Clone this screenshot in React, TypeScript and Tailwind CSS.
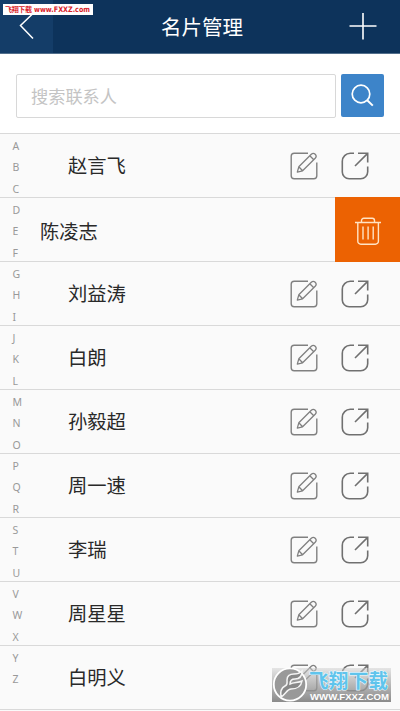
import { useState } from "react";

type Contact = { name: string; letters: string[]; swiped?: boolean };

const contacts: Contact[] = [
  { name: "赵言飞", letters: ["A", "B", "C"] },
  { name: "陈凌志", letters: ["D", "E", "F"], swiped: true },
  { name: "刘益涛", letters: ["G", "H", "I"] },
  { name: "白朗", letters: ["J", "K", "L"] },
  { name: "孙毅超", letters: ["M", "N", "O"] },
  { name: "周一速", letters: ["P", "Q", "R"] },
  { name: "李瑞", letters: ["S", "T", "U"] },
  { name: "周星星", letters: ["V", "W", "X"] },
  { name: "白明义", letters: ["Y", "Z"] },
];

function EditIcon() {
  return (
    <svg width="28" height="28" viewBox="0 0 28 28" fill="none" stroke="#808080" strokeWidth="1.4">
      <path d="M18 1.2H4.2a3 3 0 0 0-3 3v19.6a3 3 0 0 0 3 3h19.6a3 3 0 0 0 3-3V10.5" />
      <path
        d="M7.3 20.2l1.5-5.4L21.3 2.3a2.7 2.7 0 0 1 3.9 3.9L12.6 18.8zM8.8 14.8l3.8 4M19.8 3.8l4 4"
        strokeLinejoin="round"
        strokeWidth="1.3"
      />
    </svg>
  );
}

function ShareIcon() {
  return (
    <svg width="28" height="28" viewBox="0 0 28 28" fill="none" stroke="#707070" strokeWidth="1.6">
      <path d="M13 1.3H9.3a8 8 0 0 0-8 8V20a6.8 6.8 0 0 0 6.8 6.8h11.6a7 7 0 0 0 7-7V14.5" />
      <path d="M17 1.3h9.7v9.2M26.4 1.6L14 14" />
    </svg>
  );
}

function TrashIcon() {
  return (
    <svg width="28" height="28" viewBox="0 0 28 28" fill="none" stroke="#ffe3c4" strokeWidth="1.4">
      <path d="M1 5.5h26M7.5 5.2V3.5A2.2 2.2 0 0 1 9.7 1.3h8.6a2.2 2.2 0 0 1 2.2 2.2v1.7" />
      <path d="M3.8 5.5v18.7a3 3 0 0 0 3 3h14.6a3 3 0 0 0 3-3V5.5M9 9.5v13M14.1 9.5v13M19.2 9.5v13" />
    </svg>
  );
}

function ContactRow({ contact }: { contact: Contact }) {
  return (
    <li className="flex h-16 border-t border-[#d9d9d9]">
      <div className="flex w-10 shrink-0 flex-col pt-[2px] pl-[12.5px] text-[10.5px] text-[#999]">
        {contact.letters.map((l) => (
          <span key={l} className="h-[21.33px] leading-[21.33px]">
            {l}
          </span>
        ))}
      </div>
      <span
        className={
          contact.swiped
            ? "flex-1 pt-[2px] text-[19.3px] leading-[63px]"
            : "flex-1 pl-7 text-[19.3px] leading-[63px]"
        }
      >
        {contact.name}
      </span>
      {contact.swiped ? (
        <button className="-mt-px flex h-[65px] w-[65px] items-center justify-center bg-[#ec6202] pt-[3px]">
          <TrashIcon />
        </button>
      ) : (
        <div className="flex gap-[23px] pt-[18px] pr-[31px]">
          <EditIcon />
          <ShareIcon />
        </div>
      )}
    </li>
  );
}

function Watermark() {
  return (
    <div className="absolute top-[668px] left-[272px] flex h-[34px] w-[119px] items-center bg-linear-to-b from-[#d0d0d0]/50 to-[#858585]/95">
      <svg width="37" height="36" viewBox="0 0 37 36" className="shrink-0">
        <circle cx="18" cy="17.5" r="16.2" fill="#999" stroke="#fff" strokeWidth="1.8" />
        <path
          d="M9 30c-1-6 0-9 4-11 3-1 2-3 2-6 0-4 3-6 7-6 4 0 6-1 8-3 0 6-3 8-7 8-4 0-5 2-5 5 4-2 8-1 12-3-1 6-5 8-11 8-4 0-5 5-10 8z"
          fill="#888"
          stroke="#f5f5f5"
          strokeWidth="1.5"
        />
      </svg>
      <svg width="82" height="34" viewBox="0 0 82 34" className="shrink-0 overflow-visible">
        <text
          x="0"
          y="19.5"
          textLength="79"
          fill="#5fc4ec"
          stroke="#e9f8ff"
          strokeWidth="1.2"
          paintOrder="stroke"
          fontSize="19.5"
          fontWeight="700"
          fontFamily="Noto Sans CJK SC, sans-serif"
        >
          飞翔下载
        </text>
        <text
          x="1"
          y="32"
          textLength="79"
          lengthAdjust="spacingAndGlyphs"
          fill="#fff"
          fontSize="8.5"
          fontWeight="700"
          fontFamily="Liberation Sans, sans-serif"
        >
          WWW.FXXZ.COM
        </text>
      </svg>
    </div>
  );
}

export default function App() {
  const [keyword, setKeyword] = useState("");

  return (
    <div className="relative h-[711px] w-[400px] overflow-hidden bg-[#fafafa] font-['Noto_Sans','Noto_Sans_CJK_SC',sans-serif] text-[#292929]">
      <header className="flex h-[54px] items-center border-b border-[#526f8c] bg-[#0d335b] text-white">
        <button className="flex h-full w-[53px] items-center bg-[#143d68] pl-[19px]">
          <svg width="16" height="28" viewBox="0 0 16 28" fill="none" stroke="#fff" strokeWidth="1.5">
            <path d="M14 .5L1.5 12.5 14 25.5" />
          </svg>
        </button>
        <h1 className="flex-1 pt-px pl-[108px] text-[20.5px] leading-[54px]">名片管理</h1>
        <button className="mr-[23px]">
          <svg width="28" height="28" viewBox="0 0 28 28" stroke="#fff" strokeWidth="1.6">
            <path d="M.5 13h27M14-.5v27" />
          </svg>
        </button>
      </header>

      <div className="flex h-[79px] gap-[5px] bg-white pt-5 pl-4">
        <input
          value={keyword}
          onChange={(e) => setKeyword(e.target.value)}
          placeholder="搜索联系人"
          className="h-[44px] w-[320px] rounded-[2px] border border-[#d8d8d8] bg-white px-[14px] pt-px text-[17.2px] placeholder:text-[#c4c4c4]"
        />
        <button className="flex h-[43px] w-[43px] items-center justify-center rounded-[2px] bg-[#3d84c9]">
          <svg width="23" height="23" viewBox="0 0 23 23" fill="none" stroke="#fff" strokeWidth="1.7">
            <circle cx="10" cy="10" r="8.8" />
            <path d="M16.2 16.2l5.6 5.4" strokeWidth="2" />
          </svg>
        </button>
      </div>

      <ul className="border-b border-[#d9d9d9]">
        {contacts.map((c) => (
          <ContactRow key={c.name} contact={c} />
        ))}
      </ul>

      <Watermark />

      <div className="absolute top-1 left-[3px] flex h-[11px] w-[90px] items-center bg-white pl-[2px] font-bold">
        <svg width="87" height="11" viewBox="0 0 87 11" fill="#d9232b" className="overflow-visible">
          <text x="0" y="8.3" fontSize="7" textLength="27" fontFamily="Noto Sans CJK SC, sans-serif">
            飞翔下载
          </text>
          <text x="29" y="8.3" fontSize="7.5" textLength="56" lengthAdjust="spacingAndGlyphs" fontFamily="DejaVu Sans, sans-serif">
            www.FXXZ.com
          </text>
        </svg>
      </div>
    </div>
  );
}
